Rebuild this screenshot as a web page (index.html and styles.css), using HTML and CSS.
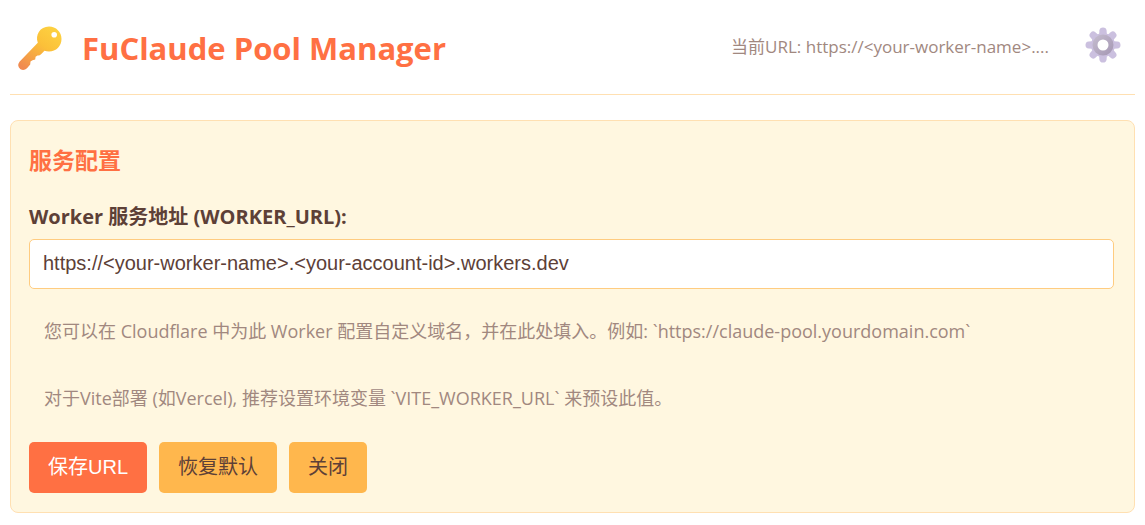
FILE: index.html
```html
<!DOCTYPE html>
<html lang="zh-CN">
<head>
<meta charset="utf-8">
<meta name="viewport" content="width=device-width, initial-scale=1">
<title>FuClaude Pool Manager</title>
<link rel="stylesheet" href="styles.css">
</head>
<body>
<header class="header">
  <div class="brand">
    <svg class="key-icon" viewBox="0 0 48 48" aria-hidden="true">
      <defs>
        <linearGradient id="key-fill" x1="36" y1="4" x2="8" y2="44" gradientUnits="userSpaceOnUse">
          <stop offset="0" stop-color="#fdd040"/>
          <stop offset=".4" stop-color="#fbc039"/>
          <stop offset="1" stop-color="#f08a50"/>
        </linearGradient>
      </defs>
      <path fill="url(#key-fill)" fill-rule="evenodd" d="M33 2.500C40 2.500 45.500 8 45.500 15S40 27.500 33 27.500Q30.500 27.500 28.500 26.800L25 30.200Q23.500 32 21.500 31.500L19.600 32.800L19.200 35.500L16.500 36.200L14.500 37.500L14.200 40.500L11 44.200Q8 47 4.500 45.200Q.500 42 3.500 37.800L21.800 18.800C19 11 24 2.500 33 2.500ZM38.200 8A2.800 2.800 0 1 0 38.200 13.600A2.800 2.800 0 1 0 38.200 8Z"/>
    </svg>
    <h1 class="brand-title">FuClaude Pool Manager</h1>
  </div>
  <div class="header-actions">
    <span class="current-url">当前URL: https://&lt;your-worker-name&gt;....</span>
    <button class="settings-button" type="button" aria-label="设置">
      <svg class="gear-icon" viewBox="0 0 36 36" aria-hidden="true">
        <defs>
          <linearGradient id="gear-ring" x1="0" y1="0" x2="1" y2="1">
            <stop offset="0" stop-color="#c2b9cc"/>
            <stop offset="1" stop-color="#a89bb6"/>
          </linearGradient>
          <path id="tooth" d="M14 10L14.400 3.600Q14.700 .500 18 .500T21.600 3.600L22 10Z"/>
        </defs>
        <g fill="#cbc0df">
          <use href="#tooth"/>
          <use href="#tooth" transform="rotate(45 18 18)"/>
          <use href="#tooth" transform="rotate(90 18 18)"/>
          <use href="#tooth" transform="rotate(135 18 18)"/>
          <use href="#tooth" transform="rotate(180 18 18)"/>
          <use href="#tooth" transform="rotate(225 18 18)"/>
          <use href="#tooth" transform="rotate(270 18 18)"/>
          <use href="#tooth" transform="rotate(315 18 18)"/>
          <circle cx="18" cy="18" r="12"/>
        </g>
        <circle cx="18" cy="18" r="8" fill="#fff" stroke="url(#gear-ring)" stroke-width="5"/>
      </svg>
    </button>
  </div>
</header>
<main class="panel">
  <h2 class="panel-title">服务配置</h2>
  <form class="config-form">
    <label class="field-label" for="worker-url">Worker 服务地址 (WORKER_URL):</label>
    <input class="field-input" id="worker-url" type="text" value="https://&lt;your-worker-name&gt;.&lt;your-account-id&gt;.workers.dev">
    <p class="hint">您可以在 Cloudflare 中为此 Worker 配置自定义域名，并在此处填入。例如: `https://claude-pool.yourdomain.com`</p>
    <p class="hint">对于Vite部署 (如Vercel), 推荐设置环境变量 `VITE_WORKER_URL` 来预设此值。</p>
    <div class="button-row">
      <button class="button button-primary" type="button">保存URL</button>
      <button class="button" type="button">恢复默认</button>
      <button class="button" type="button">关闭</button>
    </div>
  </form>
</main>
</body>
</html>
```

FILE: styles.css
```css
* {
  box-sizing: border-box;
}

body {
  margin: 0;
  padding: 0 10px 12px;
  background: #fff;
  color: #5d4037;
  font-family: "Open Sans", "Noto Sans CJK SC", sans-serif;
}

.header {
  display: flex;
  align-items: center;
  justify-content: space-between;
  padding: 24px 14px 22px 6px;
  border-bottom: 1px solid #ffe0b2;
}

.brand {
  display: flex;
  align-items: center;
  gap: 18px;
}

.key-icon {
  width: 48px;
  height: 48px;
}

.brand-title {
  margin: 0;
  color: #ff7043;
  font-size: 31px;
  line-height: 48px;
}

.header-actions {
  display: flex;
  align-items: center;
  gap: 36px;
  padding-bottom: 2px;
}

.current-url {
  color: #a1887f;
  font-size: 17px;
  line-height: 24px;
}

.settings-button {
  display: flex;
  padding: 0 0 4px;
  border: 0;
  background: none;
  cursor: pointer;
}

.gear-icon {
  width: 36px;
  height: 36px;
}

.panel {
  margin-top: 25px;
  padding: 21px 20px 19px 18px;
  border: 1px solid #ffe0b2;
  border-radius: 8px;
  background: #fff7e0;
}

.panel-title {
  margin: 0 0 24px;
  color: #ff7043;
  font-size: 23px;
  line-height: 36px;
}

.config-form {
  display: flex;
  flex-direction: column;
}

.field-label {
  margin-bottom: 7px;
  font-size: 20px;
  font-weight: 700;
  line-height: 30px;
}

.field-input {
  width: 100%;
  height: 50px;
  padding: 0 13px 2px;
  border: 1px solid #ffcc80;
  border-radius: 5px;
  background: #fff;
  color: #5d4037;
  font-family: "Liberation Sans", Arial, sans-serif;
  font-size: 20px;
}

.hint {
  margin: 0;
  padding: 28px 15px 11px;
  color: #a1887f;
  font-size: 18px;
  line-height: 28px;
}

.button-row {
  display: flex;
  gap: 12px;
  margin-top: 19px;
}

.button {
  padding: 10px 19px;
  border: 0;
  border-radius: 5px;
  background: #ffb74d;
  color: #5d4037;
  font-family: "Liberation Sans", "Noto Sans CJK SC", sans-serif;
  font-size: 20px;
  line-height: 31px;
  cursor: pointer;
}

.button-primary {
  background: #ff7043;
  color: #fff;
}
```
